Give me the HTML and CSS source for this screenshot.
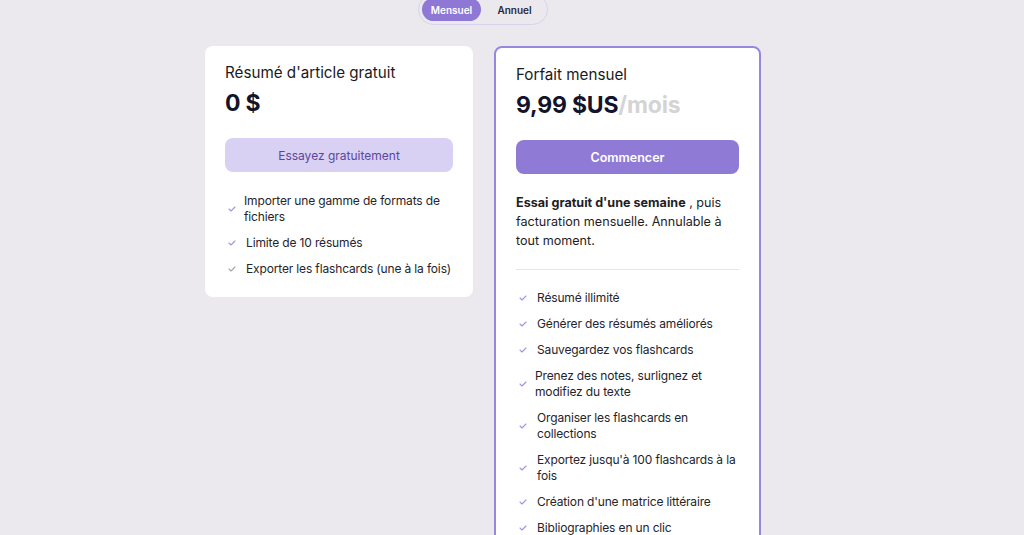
FILE: index.html
```html
<!DOCTYPE html>
<html lang="fr">
<head>
<meta charset="utf-8">
<link rel="stylesheet" href="styles.css">
</head>
<body>
<div class="page">
  <div class="toggle-row">
    <div class="toggle">
      <span class="opt active">Mensuel</span>
      <span class="opt">Annuel</span>
    </div>
  </div>
  <div class="plans">
    <div class="card">
      <div class="title">Résumé d'article gratuit</div>
      <div class="price">0 $</div>
      <button class="btn btn-light">Essayez gratuitement</button>
      <ul class="features">
        <li class="wrap"><svg class="chk" viewBox="0 0 8 6"><path d="M1 3l2 2 4-4"/></svg><span>Importer une gamme de formats de<br>fichiers</span></li>
        <li><svg class="chk" viewBox="0 0 8 6"><path d="M1 3l2 2 4-4"/></svg><span>Limite de 10 résumés</span></li>
        <li><svg class="chk gray" viewBox="0 0 8 6"><path d="M1 3l2 2 4-4"/></svg><span>Exporter les flashcards (une à la fois)</span></li>
      </ul>
    </div>
    <div class="card featured">
      <div class="title">Forfait mensuel</div>
      <div class="price">9,99 $US<span class="per">/mois</span></div>
      <button class="btn btn-primary">Commencer</button>
      <p class="desc"><b>Essai gratuit d'une semaine</b> , puis facturation mensuelle. Annulable à tout moment.</p>
      <hr class="sep">
      <ul class="features">
        <li><svg class="chk" viewBox="0 0 8 6"><path d="M1 3l2 2 4-4"/></svg><span>Résumé illimité</span></li>
        <li><svg class="chk" viewBox="0 0 8 6"><path d="M1 3l2 2 4-4"/></svg><span>Générer des résumés améliorés</span></li>
        <li><svg class="chk" viewBox="0 0 8 6"><path d="M1 3l2 2 4-4"/></svg><span>Sauvegardez vos flashcards</span></li>
        <li class="wrap"><svg class="chk" viewBox="0 0 8 6"><path d="M1 3l2 2 4-4"/></svg><span>Prenez des notes, surlignez et<br>modifiez du texte</span></li>
        <li><svg class="chk" viewBox="0 0 8 6"><path d="M1 3l2 2 4-4"/></svg><span>Organiser les flashcards en<br>collections</span></li>
        <li><svg class="chk" viewBox="0 0 8 6"><path d="M1 3l2 2 4-4"/></svg><span>Exportez jusqu'à 100 flashcards à la<br>fois</span></li>
        <li><svg class="chk" viewBox="0 0 8 6"><path d="M1 3l2 2 4-4"/></svg><span>Création d'une matrice littéraire</span></li>
        <li><svg class="chk" viewBox="0 0 8 6"><path d="M1 3l2 2 4-4"/></svg><span>Bibliographies en un clic</span></li>
      </ul>
    </div>
  </div>
</div>
</body>
</html>
```

FILE: styles.css
```css
* { box-sizing: border-box; }
html, body {
  margin: 0;
  padding: 0;
  background: #ebe9ee;
  font-family: "Inter", "Noto Sans", sans-serif;
  color: #1b1a22;
  overflow: hidden;
  height: 535px;
}
.page {
  width: 556px;
  margin-left: 205px;
}
.toggle-row {
  display: flex;
  justify-content: center;
  margin-top: -6px;
}
.toggle {
  display: flex;
  align-items: flex-end;
  gap: 4px;
  padding: 3px;
  border: 1px solid #d8d2ef;
  border-radius: 16px;
  width: 130px;
  height: 31px;
}
.opt {
  height: 23px;
  display: flex;
  align-items: center;
  justify-content: center;
  font-size: 10px;
  font-weight: 600;
  color: #2a2833;
  border-radius: 12px;
  width: 59px;
}
.opt.active {
  background: #8e77d5;
  color: #fff;
}
.plans {
  display: flex;
  align-items: flex-start;
  gap: 21px;
  margin-top: 21px;
}
.card {
  background: #fff;
  border-radius: 8px;
  padding: 17px 20px 20px 20px;
  width: 268px;
}
.card.featured {
  width: 267px;
  border: 2px solid #9a86de;
  padding: 17px 20px 20px 20px;
  height: 520px;
}
.title {
  font-size: 15.2px;
  line-height: 20px;
  color: #1b1a22;
}
.price {
  margin-top: 7px;
  font-size: 23px;
  line-height: 26px;
  font-weight: 700;
  color: #14132a;
  letter-spacing: -0.2px;
}
.per {
  color: #d4d4d6;
  font-weight: 700;
}
.btn {
  display: block;
  width: 100%;
  height: 34px;
  margin-top: 22px;
  border: none;
  border-radius: 8px;
  font-family: inherit;
  font-size: 12px;
}
.btn-light {
  background: #d8d1f4;
  color: #5a479c;
}
.btn-primary {
  background: #8f7ad6;
  color: #fff;
  font-weight: 600;
  font-size: 12.5px;
  margin-top: 22px;
}
.desc {
  margin: 19px 0 0 0;
  font-size: 12.6px;
  line-height: 19px;
  color: #1e1d25;
}
.desc b { font-weight: 700; }
.sep {
  margin: 19px 0 0 0;
  border: none;
  border-top: 1px solid #e6e4ea;
}
.features {
  list-style: none;
  margin: 0;
  padding: 0;
  display: flex;
  flex-direction: column;
  gap: 10px;
}
.card:not(.featured) .features { margin-top: 21px; }
.featured .features { margin-top: 20px; }
.features li {
  display: flex;
  align-items: center;
  gap: 10px;
  font-size: 12px;
  line-height: 16px;
  color: #25242c;
  letter-spacing: -0.15px;
  white-space: nowrap;
}
.features li.wrap { gap: 8px; }
.chk {
  flex: none;
  width: 8px;
  height: 6px;
  margin-left: 3px;
  fill: none;
  stroke: #a592e2;
  stroke-width: 1.1;
  stroke-linecap: round;
  stroke-linejoin: round;
}
.chk.gray { stroke: #a7a5ad; }
```
